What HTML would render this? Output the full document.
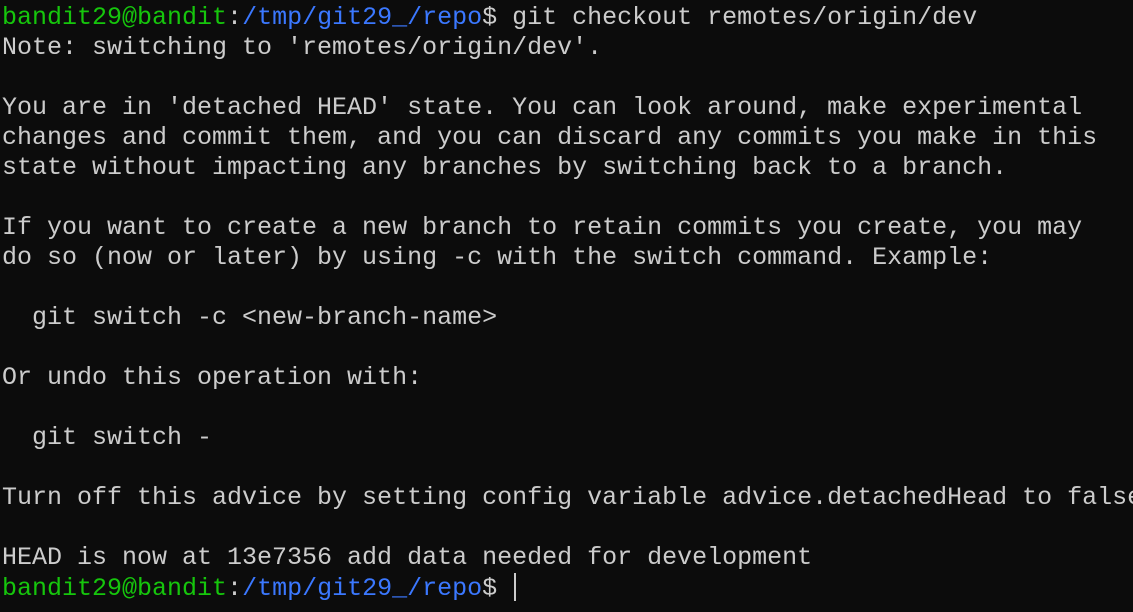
<!DOCTYPE html>
<html><head><meta charset="utf-8"><style>
html,body{margin:0;padding:0;background:#0c0c0c;width:1133px;height:612px;overflow:hidden}
pre{margin:0;position:absolute;left:2px;top:3px;font-family:"Liberation Mono",monospace;font-size:25px;line-height:30px;color:#cccccc;white-space:pre}
.g{color:#16c60c}.b{color:#3b78ff}
.cur{display:inline-block;width:2px;height:28px;background:#cccccc;vertical-align:-6px;margin-left:2px}
</style></head><body><pre><span class="g">bandit29@bandit</span>:<span class="b">/tmp/git29_/repo</span>$ git checkout remotes/origin/dev
Note: switching to 'remotes/origin/dev'.

You are in 'detached HEAD' state. You can look around, make experimental
changes and commit them, and you can discard any commits you make in this
state without impacting any branches by switching back to a branch.

If you want to create a new branch to retain commits you create, you may
do so (now or later) by using -c with the switch command. Example:

  git switch -c &lt;new-branch-name&gt;

Or undo this operation with:

  git switch -

Turn off this advice by setting config variable advice.detachedHead to false

HEAD is now at 13e7356 add data needed for development
<span class="g">bandit29@bandit</span>:<span class="b">/tmp/git29_/repo</span>$ <span class="cur"></span></pre></body></html>
